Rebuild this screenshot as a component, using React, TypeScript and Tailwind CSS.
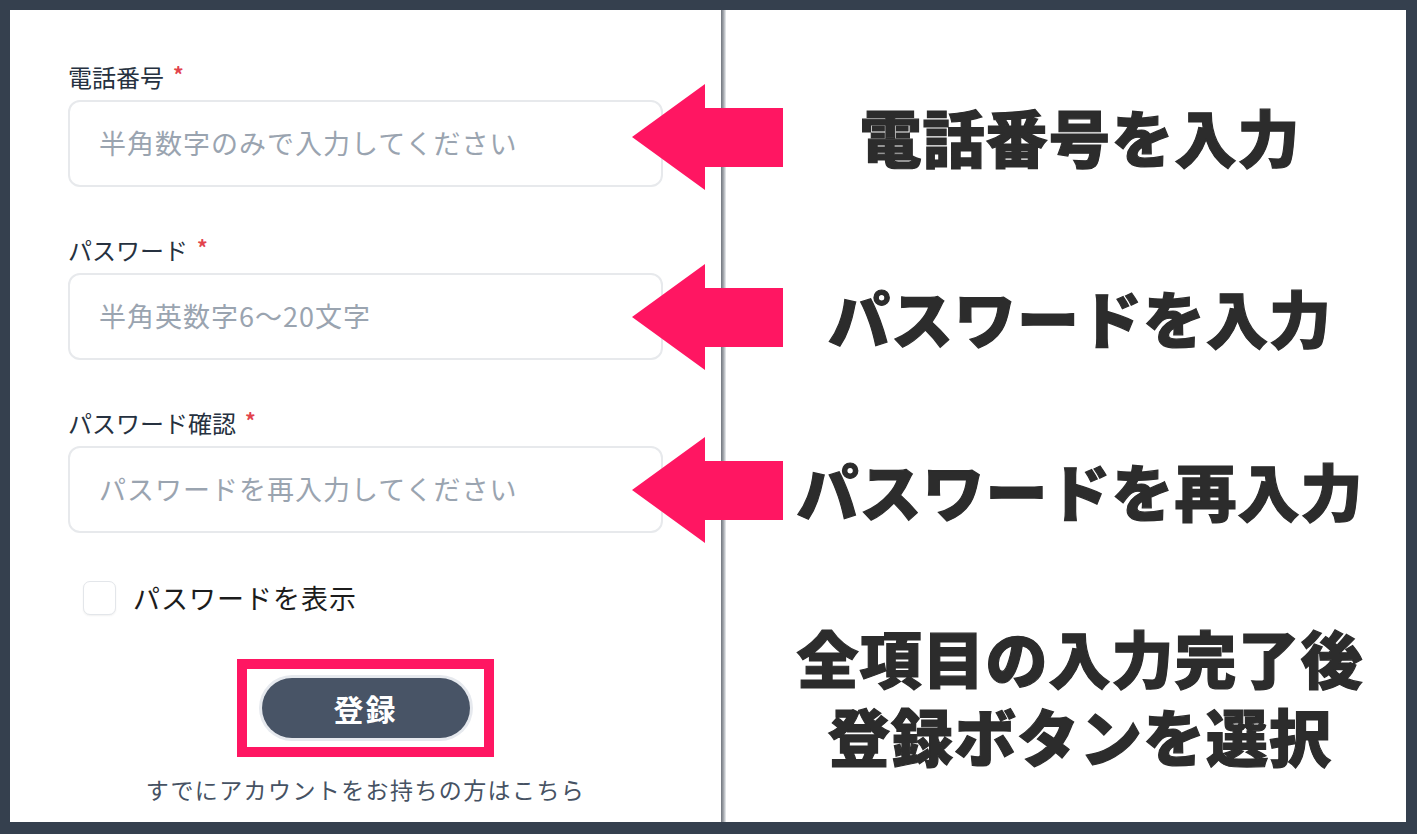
function Arrow() {
  return (
    <svg
      width="151"
      height="106"
      viewBox="0 0 151 106"
      className="relative z-10 shrink-0 -ml-[94px]"
    >
      <polygon
        points="0,53 73,0 73,24 151,24 151,83 73,83 73,106"
        fill="#ff1662"
      />
    </svg>
  );
}

function Field({ label, placeholder }: { label: string; placeholder: string }) {
  return (
    <div className="flex flex-col">
      <label className="flex items-start text-[24px] leading-[30px] text-[#263140]">
        {label}
        <span className="ml-[9px] -mt-[3px] text-[21px] font-bold leading-[30px] text-[#e2434d]">
          *
        </span>
      </label>
      <div className="mt-[8px] flex h-[87px] items-center rounded-[12px] border-2 border-[#e7e9ec] bg-white pl-[29px]">
        <span className="text-[27px] tracking-[1px] text-[#9aa4b0]">
          {placeholder}
        </span>
      </div>
    </div>
  );
}

export default function App() {
  return (
    <div
      className="h-[834px] w-[1417px] bg-[#35404e] pt-[10px] pl-[10px] pr-[11px] pb-[12px]"
      style={{ fontFamily: '"Noto Sans CJK JP", "Noto Sans", sans-serif' }}
    >
      <div className="flex h-full bg-white">
        {/* form */}
        <div className="flex w-[711px] flex-col px-[58px] pt-[52px]">
          <div className="flex flex-col gap-[48px]">
            <Field label="電話番号" placeholder="半角数字のみで入力してください" />
            <Field label="パスワード" placeholder="半角英数字6〜20文字" />
            <Field label="パスワード確認" placeholder="パスワードを再入力してください" />
          </div>
          <div className="mt-[47px] ml-[15px] flex items-center">
            <span className="h-[34px] w-[33px] rounded-[7px] border border-[#e3e6ea] bg-white shadow-[0_1px_2px_rgba(0,0,0,0.06)]" />
            <span className="ml-[17px] text-[27px] leading-[36px] tracking-[1px] text-[#1c1c1c]">
              パスワードを表示
            </span>
          </div>
          <div className="mt-[43px] flex justify-center">
            <div className="flex h-[98px] w-[257px] items-center justify-center border-[10px] border-[#ff1662]">
              <button className="h-[60px] w-[208px] rounded-full bg-[#485466] text-[30px] font-bold tracking-[2px] text-white ring-[3px] ring-[#e6e9ee]">
                登録
              </button>
            </div>
          </div>
          <p className="mt-[17px] text-center text-[23px] leading-[30px] tracking-[1.4px] text-[#465263]">
            すでにアカウントをお持ちの方はこちら
          </p>
        </div>

        {/* divider */}
        <div className="w-[5px] shrink-0 bg-linear-to-r from-[#6f747c] via-[#a3a7ad] to-[#eef0f2]" />

        {/* captions */}
        <div className="flex flex-1 flex-col pt-[74px] font-black text-[#2c2c2c] [-webkit-text-stroke:1.2px_#2c2c2c]">
          <div className="flex h-[106px] items-center">
            <Arrow />
            <p className="flex-1 pr-[29px] pb-[2px] text-center text-[62px] leading-none tracking-[1px]">
              電話番号を入力
            </p>
          </div>
          <div className="mt-[74px] flex h-[106px] items-center">
            <Arrow />
            <p className="flex-1 pr-[29px] text-center text-[62px] leading-none tracking-[1px]">
              パスワードを入力
            </p>
          </div>
          <div className="mt-[67px] flex h-[106px] items-center">
            <Arrow />
            <p className="flex-1 pr-[29px] text-center text-[62px] leading-none tracking-[1px]">
              パスワードを再入力
            </p>
          </div>
          <div className="mt-[83px] ml-[57px] flex flex-col gap-[16px] pr-[29px] text-center text-[62px] leading-none tracking-[1px]">
            <p>全項目の入力完了後</p>
            <p>登録ボタンを選択</p>
          </div>
        </div>
      </div>
    </div>
  );
}
